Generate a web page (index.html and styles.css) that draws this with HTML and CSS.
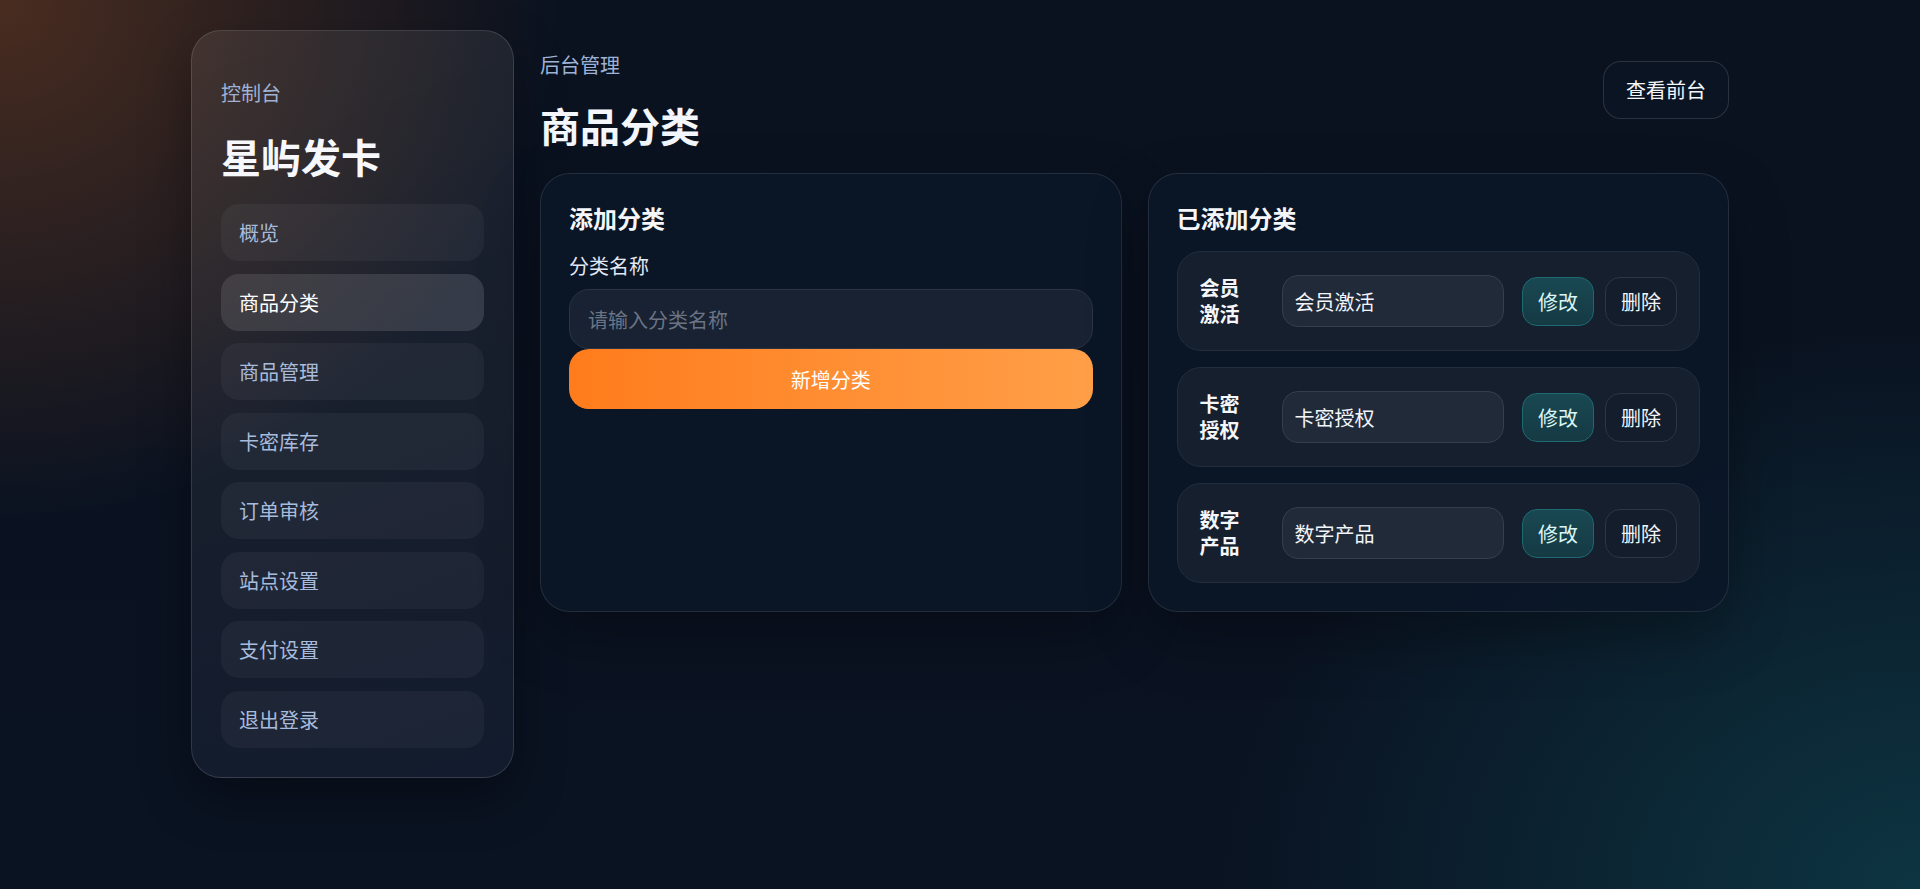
FILE: index.html
```html
<!DOCTYPE html>
<html lang="zh-CN">
<head>
    <meta charset="UTF-8">
    <meta name="viewport" content="width=device-width, initial-scale=1.0">
    <title>商品分类 - 星屿发卡</title>
    <link rel="stylesheet" href="styles.css">
</head>
<body>

<div class="layout">
    <!-- 侧边栏 -->
    <aside class="sidebar">
        <div class="eyebrow">控制台</div>
        <h1 class="brand">星屿发卡</h1>
        <nav class="nav">
            <a class="nav-item" href="#">概览</a>
            <a class="nav-item active" href="#">商品分类</a>
            <a class="nav-item" href="#">商品管理</a>
            <a class="nav-item" href="#">卡密库存</a>
            <a class="nav-item" href="#">订单审核</a>
            <a class="nav-item" href="#">站点设置</a>
            <a class="nav-item" href="#">支付设置</a>
            <a class="nav-item" href="#">退出登录</a>
        </nav>
    </aside>

    <!-- 主内容 -->
    <main class="main">
        <div class="header">
            <div>
                <div class="eyebrow">后台管理</div>
                <h2 class="page-title">商品分类</h2>
            </div>
            <a class="ghost-btn" href="#">查看前台</a>
        </div>

        <div class="cards">
            <section class="card">
                <h3 class="card-title">添加分类</h3>
                <label class="field-label" for="catName">分类名称</label>
                <input class="text-input" type="text" id="catName" placeholder="请输入分类名称">
                <button class="primary-btn">新增分类</button>
            </section>

            <section class="card">
                <h3 class="card-title">已添加分类</h3>
                <div class="cat-list">
                    <div class="cat-row">
                        <div class="cat-name">会员激活</div>
                        <input class="row-input" type="text" value="会员激活">
                        <div class="row-actions">
                            <button class="edit-btn">修改</button>
                            <button class="del-btn">删除</button>
                        </div>
                    </div>
                    <div class="cat-row">
                        <div class="cat-name">卡密授权</div>
                        <input class="row-input" type="text" value="卡密授权">
                        <div class="row-actions">
                            <button class="edit-btn">修改</button>
                            <button class="del-btn">删除</button>
                        </div>
                    </div>
                    <div class="cat-row">
                        <div class="cat-name">数字产品</div>
                        <input class="row-input" type="text" value="数字产品">
                        <div class="row-actions">
                            <button class="edit-btn">修改</button>
                            <button class="del-btn">删除</button>
                        </div>
                    </div>
                </div>
            </section>
        </div>
    </main>
</div>

</body>
</html>
```

FILE: styles.css
```css
* {
    box-sizing: border-box;
}
html, body {
    height: 100%;
}
body {
    margin: 0;
    font-family: "Noto Sans CJK SC", "Noto Sans", sans-serif;
    font-size: 20px;
    line-height: 30px;
    color: #eef2f8;
    background-color: #09121f;
    background-image:
        radial-gradient(ellipse 560px 520px at 0 0, rgba(255, 120, 30, 0.26), rgba(255, 120, 30, 0) 100%),
        radial-gradient(ellipse 700px 560px at 100% 100%, rgba(16, 80, 92, 0.55), rgba(16, 80, 92, 0) 100%),
        linear-gradient(180deg, #0a1220, #0a1322);
    overflow: hidden;
}
a {
    text-decoration: none;
    color: inherit;
}
button, input {
    font-family: inherit;
    font-size: 20px;
}
.layout {
    width: 1538px;
    margin: 0 auto;
    padding-top: 30px;
    display: grid;
    grid-template-columns: 323px 1fr;
    column-gap: 26px;
    align-items: start;
}

/* sidebar */
.sidebar {
    padding: 47px 29px 29px;
    border: 1px solid rgba(255, 255, 255, 0.13);
    border-radius: 30px;
    background: linear-gradient(160deg, rgba(255, 255, 255, 0.075), rgba(255, 255, 255, 0.055) 55%, rgba(120, 150, 200, 0.07));
    box-shadow: 0 20px 50px rgba(0, 0, 0, 0.35);
}
.eyebrow {
    color: #9fb2d4;
    font-size: 20px;
    line-height: 30px;
}
.brand {
    margin: 24px 0 24px;
    font-size: 40px;
    line-height: 48px;
    font-weight: 700;
    color: #f6f8fc;
}
.nav {
    display: flex;
    flex-direction: column;
    gap: 12.5px;
}
.nav-item {
    height: 57px;
    line-height: 57px;
    padding: 0 18px;
    border-radius: 18px;
    background: rgba(255, 255, 255, 0.045);
    color: #a7bbdd;
}
.nav-item.active {
    background: linear-gradient(120deg, rgba(255, 255, 255, 0.1), rgba(255, 255, 255, 0.13));
    color: #ffffff;
}

/* main */
.header {
    display: flex;
    justify-content: space-between;
    align-items: flex-start;
    padding-top: 20px;
    margin-bottom: 24px;
}
.page-title {
    margin: 21px 0 0;
    font-size: 40px;
    line-height: 48px;
    font-weight: 700;
    color: #f3f6fb;
}
.ghost-btn {
    margin-top: 11px;
    padding: 13px 22px;
    border: 1px solid rgba(255, 255, 255, 0.13);
    border-radius: 18px;
    background: rgba(12, 22, 38, 0.6);
    color: #f4f6fa;
}
.cards {
    display: grid;
    grid-template-columns: 1fr 1fr;
    column-gap: 26px;
}
.card {
    padding: 28px;
    border: 1px solid rgba(255, 255, 255, 0.1);
    border-radius: 30px;
    background: rgba(11, 22, 39, 0.85);
    box-shadow: 0 24px 60px rgba(0, 0, 0, 0.3);
}
.card-title {
    margin: 0 0 18px;
    font-size: 24px;
    line-height: 31px;
    font-weight: 700;
    color: #f4f6fa;
}
.field-label {
    display: block;
    margin-bottom: 8px;
    color: #e3e9f2;
}
.text-input {
    display: block;
    width: 100%;
    height: 60px;
    padding: 0 18px;
    border: 1px solid #2a3445;
    border-radius: 20px;
    background: #182232;
    color: #eef2f8;
    outline: none;
}
.text-input::placeholder {
    color: #6b7484;
}
.primary-btn {
    display: block;
    width: 100%;
    height: 60px;
    border: none;
    border-radius: 20px;
    background: linear-gradient(90deg, #ff7c1c, #ff9f48);
    color: #ffffff;
    cursor: pointer;
}

/* category list */
.cat-list {
    display: flex;
    flex-direction: column;
    gap: 16px;
}
.cat-row {
    display: grid;
    grid-template-columns: 64px 1fr auto;
    column-gap: 18px;
    align-items: center;
    height: 100px;
    padding: 0 22px;
    border: 1px solid #232d3c;
    border-radius: 24px;
    background: #161f2e;
}
.cat-name {
    max-width: 44px;
    font-weight: 700;
    line-height: 26px;
    color: #f4f6fa;
}
.row-input {
    width: 100%;
    height: 52px;
    padding: 0 12px;
    border: 1px solid #343e4e;
    border-radius: 16px;
    background: #212a39;
    color: #f2f5f9;
    outline: none;
}
.row-actions {
    display: flex;
    gap: 11px;
}
.edit-btn, .del-btn {
    height: 49px;
    padding: 0 15px;
    border-radius: 15px;
    cursor: pointer;
}
.edit-btn {
    border: 1px solid #1d6a70;
    background: linear-gradient(180deg, #194852, #153a44);
    color: #dcf6f6;
}
.del-btn {
    border: 1px solid #2d3646;
    background: #141d2b;
    color: #f2f5f9;
}
```
